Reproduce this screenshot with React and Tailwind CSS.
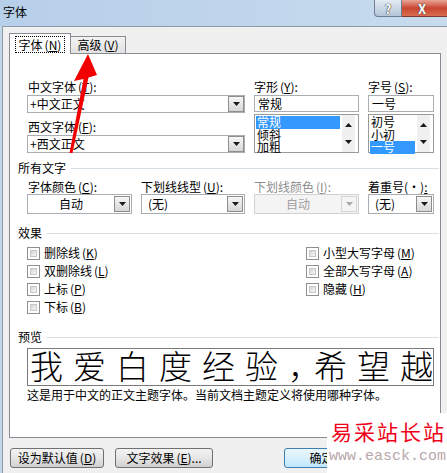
import React from "react";

const Mn = ({ k }) => (
  <span className="ml-[2px]">
    (<span className="underline">{k}</span>)
  </span>
);

function Tri({ up, disabled }) {
  return (
    <svg width="7" height="4" viewBox="0 0 7 4">
      <path d={up ? "M0 4h7L3.5 0z" : "M0 0h7L3.5 4z"} fill={disabled ? "#a8a8a8" : "#1a1a1a"} />
    </svg>
  );
}

function DropBtn({ disabled }) {
  return (
    <div
      className={
        disabled
          ? "w-[16px] h-[16px] flex items-center justify-center border border-[#d6d6d6] bg-[#f4f4f4]"
          : "w-[16px] h-[16px] flex items-center justify-center border border-[#8d8d8d] bg-gradient-to-b from-[#f7f7f7] to-[#d6d6d6]"
      }
    >
      <Tri disabled={disabled} />
    </div>
  );
}

function EditCombo({ value }) {
  return (
    <div className="h-[18px] border border-[#abadb3] bg-white flex items-center pl-[2px]">
      <span className="flex-1">{value}</span>
      <DropBtn />
    </div>
  );
}

function ListCombo({ value, center, disabled }) {
  return (
    <div
      className={
        disabled
          ? "h-[20px] border border-[#d2d2d2] bg-[#f4f4f4] flex items-center pr-[1px] text-[#a0a0a0]"
          : "h-[20px] border border-[#abadb3] bg-white flex items-center pr-[1px]"
      }
    >
      <span className={center ? "flex-1 text-center" : "flex-1 pl-[6px]"}>{value}</span>
      <DropBtn disabled={disabled} />
    </div>
  );
}

function ListBox({ items, sel }) {
  return (
    <div className="h-[39px] border border-[#9a9a9a] bg-white flex pl-[1px] pt-[1px]">
      <div className="flex-1 mr-[2px]">
        {items.map((it, i) => (
          <div
            key={it}
            className={
              i === sel
                ? "h-[12.5px] leading-[12.5px] bg-[#3399ff] text-white pl-[1px]"
                : "h-[12.5px] leading-[12.5px] pl-[1px]"
            }
          >
            {it}
          </div>
        ))}
      </div>
      <div className="w-[13px] mr-[3px] -mt-[1px] bg-[#f0f0f0] flex flex-col items-center justify-between py-[8px]">
        <Tri up />
        <Tri />
      </div>
    </div>
  );
}

function Check({ label }) {
  return (
    <div className="h-[18px] flex items-center">
      <div className="w-[13px] h-[13px] border border-[#8f8f8f] bg-white p-[2px]">
        <div className="w-full h-full border border-[#c4c7cb] bg-gradient-to-br from-[#d4d4d4] to-[#f8f8f8]" />
      </div>
      <span className="ml-[4px]">{label}</span>
    </div>
  );
}

function Group({ title }) {
  return (
    <div className="flex items-center h-[14px] pl-[8px]">
      <span>{title}</span>
      <div className="flex-1 h-px bg-[#d5dfe5] ml-[5px] mr-[1px]" />
    </div>
  );
}

export default function App() {
  return (
    <div className="w-[447px] h-[473px] overflow-hidden relative bg-[#c4d7eb] text-[12px] leading-[14px] text-black font-['Noto_Sans_CJK_SC','Noto_Sans',sans-serif]">
      {/* title bar */}
      <div className="h-[26px] flex items-start bg-gradient-to-r from-[#b7cfe9] to-[#c8dbee]">
        <span className="pl-[3px] pt-[5px]">字体</span>
        <div className="ml-auto flex mr-[-20px]">
          <div className="w-[28px] h-[17px] border border-t-0 border-[#6d7d90] rounded-bl-[4px] bg-gradient-to-b from-[#e3ebf4] to-[#b4c5d8] flex items-center justify-center text-[13px] leading-[15px] font-bold text-white [text-shadow:0_0_1px_#222,0_0_1px_#222]">
            ?
          </div>
          <div className="w-[65px] h-[17px] border border-t-0 border-l-0 border-[#7a3a30] bg-gradient-to-b from-[#e8a496] via-[#c8452f] to-[#d96c50] flex items-center justify-start pl-[16px] text-[13px] leading-[15px] font-bold text-white [text-shadow:0_0_1px_#333,0_0_1px_#333]">
            X
          </div>
        </div>
      </div>

      {/* client area */}
      <div className="ml-[2px] w-[460px] h-[447px] border-l border-t border-[#8e9aa8] bg-[#f0f0f0] pl-[6px] pt-[6px]">
        {/* tabs */}
        <div className="flex items-end h-[21px] relative z-10">
          <div className="w-[62px] h-[21px] bg-white border border-b-0 border-[#898c95] flex items-start justify-center pt-[2px]">
            <span className="border border-dotted border-black px-[3px] h-[17px] leading-[15px]">
              字体<Mn k="N" />
            </span>
          </div>
          <div className="w-[55px] h-[17px] mb-[1px] border border-b-0 border-l-0 border-[#898c95] bg-gradient-to-b from-[#f3f3f3] to-[#e2e2e2] flex items-center justify-center">
            高级<Mn k="V" />
          </div>
        </div>

        {/* panel */}
        <div className="-mt-px w-[432px] h-[385px] border border-[#898c95] bg-white flex flex-col">
          <div className="flex pl-[17px] pt-[26px]">
            <div className="w-[218px]">
              <div className="pl-[1px]">
                中文字体<Mn k="T" />:
              </div>
              <div className="mt-[1px]">
                <EditCombo value="+中文正文" />
              </div>
              <div className="pl-[1px] mt-[7px]">
                西文字体<Mn k="F" />:
              </div>
              <div className="mt-[1px]">
                <EditCombo value="+西文正文" />
              </div>
            </div>
            <div className="w-[105px] ml-[9px]">
              <div>
                字形<Mn k="Y" />:
              </div>
              <div className="mt-[1px] h-[17px] border border-[#abadb3] bg-white pl-[3px] leading-[15px]">常规</div>
              <div className="mt-[2px]">
                <ListBox items={["常规", "倾斜", "加粗"]} sel={0} />
              </div>
            </div>
            <div className="w-[66px] ml-[9px]">
              <div>
                字号<Mn k="S" />:
              </div>
              <div className="mt-[1px] h-[17px] border border-[#abadb3] bg-white pl-[3px] leading-[15px]">一号</div>
              <div className="mt-[2px]">
                <ListBox items={["初号", "小初", "一号"]} sel={2} />
              </div>
            </div>
          </div>

          <div className="mt-[8px]">
            <Group title="所有文字" />
          </div>
          <div className="flex pl-[17px] mt-[5px] gap-[9px]">
            <div className="w-[105px]">
              <div className="pl-[1px]">
                字体颜色<Mn k="C" />:
              </div>
              <ListCombo value="自动" center />
            </div>
            <div className="w-[104px]">
              <div>
                下划线线型<Mn k="U" />:
              </div>
              <ListCombo value="(无)" />
            </div>
            <div className="w-[105px]">
              <div className="text-[#8d8d8d]">
                下划线颜色<Mn k="I" />:
              </div>
              <ListCombo value="自动" center disabled />
            </div>
            <div className="w-[66px]">
              <div>
                着重号(·)<span className="underline">:</span>
              </div>
              <ListCombo value="(无)" />
            </div>
          </div>

          <div className="mt-[12px]">
            <Group title="效果" />
          </div>
          <div className="flex pl-[17px] mt-[4px]">
            <div className="w-[279px]">
              <Check label={<>删除线<Mn k="K" /></>} />
              <Check label={<>双删除线<Mn k="L" /></>} />
              <Check label={<>上标<Mn k="P" /></>} />
              <Check label={<>下标<Mn k="B" /></>} />
            </div>
            <div>
              <Check label={<>小型大写字母<Mn k="M" /></>} />
              <Check label={<>全部大写字母<Mn k="A" /></>} />
              <Check label={<>隐藏<Mn k="H" /></>} />
            </div>
          </div>

          <div className="mt-[14px]">
            <Group title="预览" />
          </div>
          <div className="ml-[17px] mt-[4px] w-[407px] h-[38px] border border-[#7a7a7a] bg-white overflow-hidden whitespace-nowrap pl-[2px] text-[33px] leading-[32px] tracking-[10px] font-light">
            我爱白度经验<span className="tracking-[-7px]">，</span>希望越来越好
          </div>
          <div className="ml-[17px] mt-[2px]">这是用于中文的正文主题字体。当前文档主题定义将使用哪种字体。</div>
        </div>

        {/* bottom buttons */}
        <div className="flex mt-[10px] ml-[1px]">
          <button className="w-[94px] h-[20px] rounded-[3px] border border-[#707070] bg-gradient-to-b from-[#f3f3f3] via-[#e6e6e6] to-[#d0d0d0] leading-[14px]">
            设为默认值<Mn k="D" />
          </button>
          <button className="ml-[11px] w-[98px] h-[20px] rounded-[3px] border border-[#707070] bg-gradient-to-b from-[#f3f3f3] via-[#e6e6e6] to-[#d0d0d0] leading-[14px]">
            文字效果<Mn k="E" />...
          </button>
          <button className="ml-[71px] w-[75px] h-[20px] rounded-[3px] border border-[#3c7fb1] bg-gradient-to-b from-[#eaf6fd] via-[#d9f0fc] to-[#bee6fd] leading-[14px]">
            确定
          </button>
        </div>
      </div>

      {/* watermark */}
      <div className="absolute left-[327px] top-[413px] w-[120px] h-[60px] bg-white flex flex-col pl-[4px] pt-[6px]">
        <div className="text-[21px] leading-[24px] tracking-[2px] text-[#f00018] whitespace-nowrap">易采站长站</div>
        <div className="mt-[6px] -ml-[2px] text-[15px] leading-[16px] text-[#b7a8aa] whitespace-nowrap font-['Liberation_Mono',monospace]">
          www.easck.com
        </div>
      </div>

      {/* red arrow annotation */}
      <svg className="absolute left-0 top-0 pointer-events-none" width="447" height="473">
        <polygon points="88,54 97,75 88.5,77.5 72.5,153 69.5,153 83.5,79 74,81" fill="#f20000" />
      </svg>
    </div>
  );
}
